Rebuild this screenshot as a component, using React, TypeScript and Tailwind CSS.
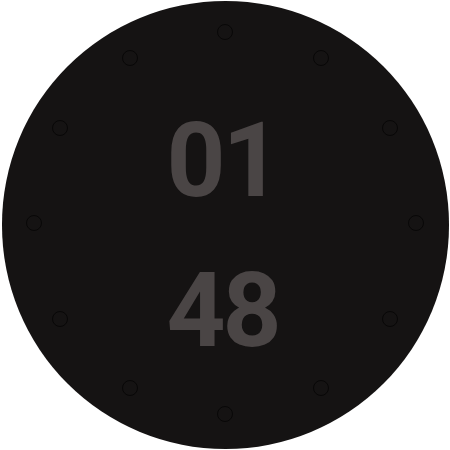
import React from 'react';

const DOTS = Array.from({ length: 12 }, (_, i) => i * 30);

const WatchFace: React.FC = () => {
    return (
        <div className="w-[450px] h-[450px] bg-white flex items-center justify-center">
            <div className="relative w-[447px] h-[448px] rounded-full bg-[#151313] flex flex-col items-center">
                {DOTS.map((deg) => {
                    const rad = (deg * Math.PI) / 180;
                    const x = 223.5 + 191 * Math.sin(rad);
                    const y = 222 - 191 * Math.cos(rad);
                    return (
                        <span
                            key={deg}
                            className="absolute w-[16px] h-[16px] rounded-full border-[1.5px] border-[#080707] -translate-x-1/2 -translate-y-1/2"
                            style={{ left: x, top: y }}
                        />
                    );
                })}
                <div
                    className="flex flex-col items-center text-[#4a4545] font-bold leading-none tracking-[-3px] pt-[108px] pr-[5px]"
                    style={{ fontFamily: 'Roboto, "Liberation Sans", sans-serif' }}
                >
                    <span className="text-[103px] leading-[104px]">01</span>
                    <span className="text-[103px] leading-[104px] mt-[46px]">48</span>
                </div>
            </div>
        </div>
    );
};

export default function App() {
    return <WatchFace />;
}
